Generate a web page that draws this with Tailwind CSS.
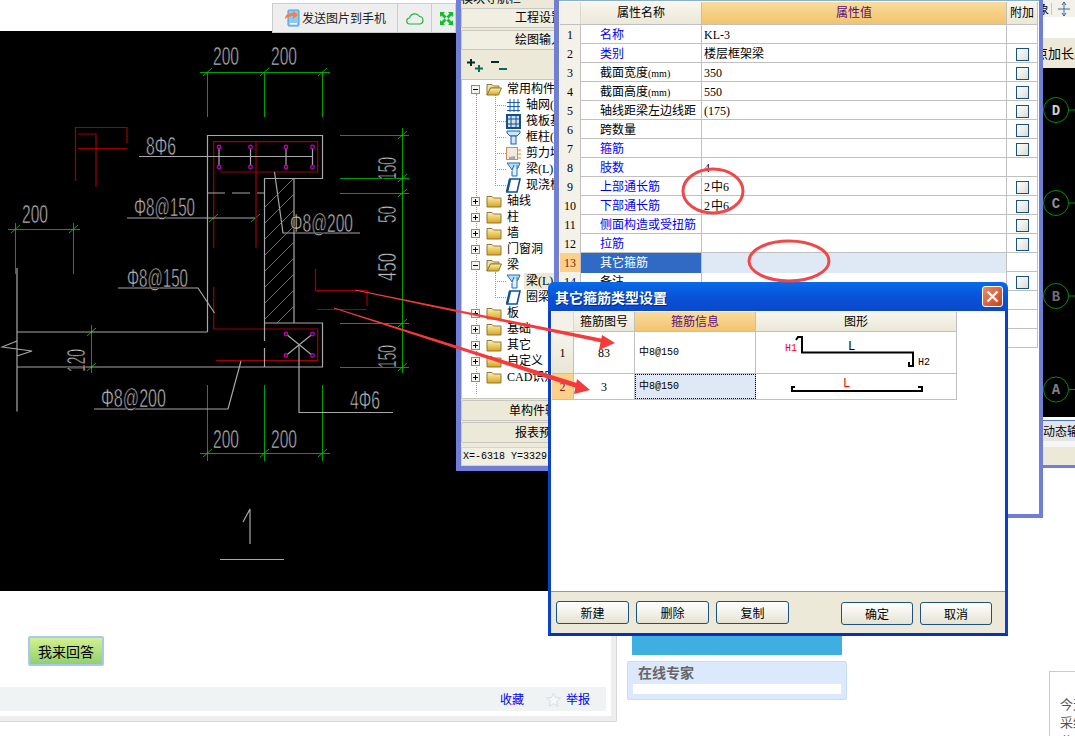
<!DOCTYPE html>
<html lang="zh">
<head>
<meta charset="utf-8">
<script src="https://cdn.jsdelivr.net/npm/@tailwindcss/browser@4"></script>
<title>其它箍筋类型设置</title>
</head>
<body class="bg-white">
<svg width="0" height="0" class="absolute">
  <defs>
    <linearGradient id="fg" x1="0" y1="0" x2="0" y2="1"><stop offset="0" stop-color="#fff2b0"/><stop offset="1" stop-color="#d9a31f"/></linearGradient>
    <symbol id="closed" viewBox="0 0 16 14"><path d="M1 2.500h5l1.500 1.500H15v9H1z" fill="url(#fg)" stroke="#8a7a3a" stroke-width="1"/></symbol>
    <symbol id="open" viewBox="0 0 16 14"><path d="M1 2.500h5l1.500 1.500H13v2H4.500L1 13z" fill="#f2e3a0" stroke="#8a7a3a"/><path d="M4.500 6H15.500L12.500 13H1z" fill="url(#fg)" stroke="#8a7a3a"/></symbol>
    <symbol id="plus" viewBox="0 0 9 9"><rect x=".5" y=".5" width="8" height="8" fill="#f5f4ee" stroke="#8a8a8a"/><path d="M2 4.500h5M4.500 2v5" stroke="#000"/></symbol>
    <symbol id="minus" viewBox="0 0 9 9"><rect x=".5" y=".5" width="8" height="8" fill="#f5f4ee" stroke="#8a8a8a"/><path d="M2 4.500h5" stroke="#000"/></symbol>
    <symbol id="beam" viewBox="0 0 15 15"><path d="M1 1h13l-2 5-5 3z" fill="#bcdcf4" stroke="#1b6fb8"/><path d="M6 9v5h5V3" fill="#dff0fb" stroke="#1b6fb8"/><path d="M8 3l-2 5" stroke="#1b6fb8"/></symbol>
    <symbol id="slab" viewBox="0 0 15 15"><path d="M4 1h10l-3 13H1z" fill="#fff" stroke="#144f9c" stroke-width="1.600"/><path d="M1 14l3-13" stroke="#144f9c" stroke-width="2.400"/></symbol>
  </defs>
</svg>

<div class="relative w-[1075px] h-[736px] overflow-hidden font-['Liberation_Serif','Noto_Sans_CJK_SC',serif] text-[12px] text-black">

  <!-- page behind -->
  <div class="h-[31px] bg-white"></div>
  <div class="h-[560px] w-[552px] bg-black">
    <svg width="552" height="560" viewBox="0 31 552 560" font-family="'Liberation Sans',sans-serif" fill="none">
      <defs><clipPath id="web"><rect x="265" y="179" width="29" height="144"/></clipPath></defs>
      <!-- dimension lines -->
      <g stroke="#00a000" stroke-width="1">
        <path d="M200 72.500H330M207.500 72V117M264.500 72V117M322.500 72V117"/>
        <path d="M340 135.500H409M340 178.500H409M340 193.500H409M340 323.500H409M340 367.500H409M402.500 128V373"/>
        <path d="M8 229.500H80M15.500 223V274M73.500 223V274"/>
        <path d="M91.500 325V373"/>
        <path d="M200 453.500H330M207.500 385V461M264.500 385V461M322.500 385V461"/>
      </g>
      <g stroke="#00e000" stroke-width=".8">
        <path d="M203 76l9-8M260 76l9-8M318 76l9-8M398 139l9-8M398 182l9-8M398 197l9-8M398 327l9-8M398 371l9-8M11 233l9-8M69 233l9-8M87 336l9-8M87 371l9-8M203 457l9-8M260 457l9-8M318 457l9-8M209 222l9-8M251 222l9-8"/>
      </g>
      <!-- stray red shape -->
      <g stroke="#a00000" stroke-width="1.200">
        <path d="M75.500 181V127.500H127V143M78 134H96V187M78 148.500H127"/>
        <path d="M213.700 248V141.700H317.700V172H220M256 141.700V248M213.700 286.700V329H317.700V360.500H216"/>
        <path d="M315.500 269V290.500H367V306M317 309.500H367"/>
      </g>
      <!-- concrete outline -->
      <g stroke="#a8a8a8" stroke-width="1.200">
        <path d="M207.500 332V135.500H322.500V178.500H264.500V341M264.500 348V367M294 178.500V323"/>
        <path d="M264.500 323H322.500V367H17M207.500 332H17M17 268V411.500"/>
        <path d="M17 341L2 347L32 351L17 356"/>
        <path d="M207 193H225M232 193H250M257 193H264"/>
        <path d="M139 156.500H313M127 218H255"/>
        <path d="M274.500 172L283 233H360"/>
        <path d="M118 288H198L214.500 313"/>
        <path d="M94 409H228L241 361"/>
        <path d="M299 345V412.500H393"/>
        <path d="M219 147V167M250.500 147V167M286 147V167M312.500 147V167"/>
        <path d="M286 334L312.500 355.500M312.500 334L286 355.500"/>
        <path d="M243 522L250 509V544M220 559.500H284"/>
      </g>
      <g clip-path="url(#web)" stroke="#888" stroke-width=".8">
        <path d="M264 208L294 178M264 224L294 194M264 240L294 210M264 256L294 226M264 272L294 242M264 288L294 258M264 304L294 274M264 320L294 290M264 336L294 306M264 352L294 322"/>
      </g>
      <!-- rebars -->
      <g stroke="#c000c0" stroke-width="1.200" fill="#200020">
        <circle cx="219" cy="147" r="1.800"/><circle cx="250.500" cy="147" r="1.800"/><circle cx="286" cy="147" r="1.800"/><circle cx="312.500" cy="147" r="1.800"/>
        <circle cx="219" cy="167" r="1.800"/><circle cx="250.500" cy="167" r="1.800"/><circle cx="286" cy="167" r="1.800"/><circle cx="312.500" cy="167" r="1.800"/>
        <circle cx="286" cy="334" r="1.800"/><circle cx="312.500" cy="334" r="1.800"/><circle cx="286" cy="355.500" r="1.800"/><circle cx="312.500" cy="355.500" r="1.800"/>
      </g>
      <g fill="#c0c0c0" stroke="#000" stroke-width=".7" font-size="26">
        <text x="213" y="65" textLength="26" lengthAdjust="spacingAndGlyphs">200</text>
        <text x="271" y="65" textLength="26" lengthAdjust="spacingAndGlyphs">200</text>
        <text x="22" y="223" textLength="26" lengthAdjust="spacingAndGlyphs">200</text>
        <text x="213" y="448" textLength="26" lengthAdjust="spacingAndGlyphs">200</text>
        <text x="271" y="448" textLength="26" lengthAdjust="spacingAndGlyphs">200</text>
        <text x="146" y="155" textLength="30" lengthAdjust="spacingAndGlyphs">8Φ6</text>
        <text x="134" y="216" textLength="61" lengthAdjust="spacingAndGlyphs">Φ8@150</text>
        <text x="290" y="232" textLength="63" lengthAdjust="spacingAndGlyphs">Φ8@200</text>
        <text x="127" y="287" textLength="61" lengthAdjust="spacingAndGlyphs">Φ8@150</text>
        <text x="101" y="407" textLength="65" lengthAdjust="spacingAndGlyphs">Φ8@200</text>
        <text x="350" y="409" textLength="30" lengthAdjust="spacingAndGlyphs">4Φ6</text>
        <text transform="translate(396 180) rotate(-90)" textLength="23" lengthAdjust="spacingAndGlyphs">150</text>
        <text transform="translate(396 223) rotate(-90)" textLength="17" lengthAdjust="spacingAndGlyphs">50</text>
        <text transform="translate(396 281) rotate(-90)" textLength="28" lengthAdjust="spacingAndGlyphs">450</text>
        <text transform="translate(396 368) rotate(-90)" textLength="23" lengthAdjust="spacingAndGlyphs">150</text>
        <text transform="translate(85 372) rotate(-90)" textLength="23" lengthAdjust="spacingAndGlyphs">120</text>
      </g>
    </svg>
  </div>
  <div class="flex h-[145px]">
    <div class="w-[617px] h-[131px] border-r border-b border-[#d6d6d6] rounded-br-[2px]">
      <div class="h-full border-r-[5px] border-b-[5px] border-[#eeeeee] flex flex-col">
        <div class="flex-1 pl-[28px] pt-[45px]">
          <div class="w-[76px] h-[30px] border-2 border-[#a9c8ee] rounded-[2px] bg-linear-to-b from-[#d3f090] to-[#90cf72] flex items-center justify-center text-[14px] leading-none font-['Noto_Sans_CJK_SC',sans-serif]">我来回答</div>
        </div>
        <div class="h-[24px] mb-[5px] mr-[5px] bg-[#f0f3f4] flex items-center justify-end pr-[16px] text-[#0000ff] font-['Noto_Sans_CJK_SC',sans-serif]">
          <span>收藏</span>
          <svg class="ml-[22px] mr-[5px]" width="15" height="15" viewBox="0 0 15 15"><path d="M7.500 1l2 4.500 5 .5-3.700 3.300 1 5-4.300-2.600-4.300 2.600 1-5L.5 6l5-.5z" fill="#f4f6f8" stroke="#d4dce4"/></svg>
          <span>举报</span>
        </div>
      </div>
    </div>
    <div class="ml-[10px] w-[220px] flex flex-col">
      <div class="ml-[5px] w-[210px] h-[64px] bg-[#3fafe2]"></div>
      <div class="mt-[6px] h-[39px] bg-[#dce8fb] border border-[#c9dcf6] rounded-[2px] px-[5px]">
        <div class="h-[22px] pl-[5px] text-[14px] leading-[21px] font-bold text-[#666666] font-['Noto_Sans_CJK_SC',sans-serif]">在线专家</div>
        <div class="h-[10px] bg-white"></div>
      </div>
    </div>
    <div class="ml-[202px] mt-[80px] w-[26px] h-[80px] border-l border-t border-[#dccb9c] pl-[10px] pt-[23px] text-[#555555] text-[13px] leading-[18px] whitespace-nowrap font-['Noto_Sans_CJK_SC',sans-serif]">今天<br>采纳<br>公</div>
  </div>

  <!-- right-hand app behind -->
  <div class="absolute left-[1043px] top-0 w-[32px] h-[468px] overflow-hidden flex flex-col border-b-[3px] border-[#6f7fd8]">
    <div class="h-[17px] bg-[#f3f1e8] flex items-center overflow-hidden font-['Noto_Sans_CJK_SC',sans-serif]">
      <span class="-ml-[6px]">象</span>
      <span class="ml-[2px] w-px h-[12px] bg-[#c8c8c0]"></span>
      <svg class="ml-[5px] shrink-0" width="14" height="14" viewBox="0 0 14 14" fill="none" stroke="#3a6ea5"><path d="M7 0v14M1 7h12M7 0L5 3M7 0l2 3M7 14l-2-3M7 14l2-3"/></svg>
    </div>
    <div class="h-[21px] bg-white"></div>
    <div class="h-[30px] bg-[#ece9d8] flex items-center overflow-hidden whitespace-nowrap text-[13px] font-['Noto_Sans_CJK_SC',sans-serif]"><span class="-ml-[8px]">点加长度</span></div>
    <div class="h-[349px] bg-black">
      <svg width="32" height="349" viewBox="0 68 32 349" font-family="'Liberation Mono',monospace" font-size="14" font-weight="bold" text-anchor="middle">
        <g fill="none" stroke="#009000"><circle cx="13" cy="110" r="12.500"/><circle cx="13" cy="203" r="12.500"/><circle cx="13" cy="296" r="12.500"/><circle cx="13" cy="389.500" r="12.500"/>
        <path d="M25.500 110H32M25.500 203H32M25.500 296H32M25.500 389.500H32"/></g>
        <text x="13" y="115" fill="#d0d0d0">D</text><text x="13" y="208" fill="#909090">C</text><text x="13" y="301" fill="#707070">B</text><text x="13" y="394" fill="#808080">A</text>
      </svg>
    </div>
    <div class="h-[3px] bg-white"></div>
    <div class="h-[21px] bg-[#e4e4e4] border-t border-[#4a78c8] flex items-center overflow-hidden whitespace-nowrap text-[12px] font-['Noto_Sans_CJK_SC',sans-serif]"><span>动态输入</span></div>
    <div class="h-[6px] bg-[#f6f6f6]"></div>
    <div class="flex-1 bg-[#ece9d8]"></div>
  </div>

  <!-- top-left floating toolbar -->
  <div class="absolute left-[272px] top-[3px] w-[184px] h-[30px] bg-[#eeeeee] border border-[#cccccc] flex items-center">
    <div class="w-[125px] h-full border-r border-[#cccccc] flex items-center pl-[11px] text-[12px] font-['Noto_Sans_CJK_SC',sans-serif] text-[#222222]">
      <svg width="16" height="18" viewBox="0 0 16 18"><rect x="4" y="1" width="11" height="16" rx="1" fill="#8fc8f0" stroke="#4a9ad8"/><rect x="6" y="14" width="7" height="1.500" fill="#fff"/><path d="M1 9c1-4 4-5 8-5V2l5 4-5 4V7C6 7 3 8 1 10z" fill="#ff7a3c"/></svg>
      <span class="ml-[2px] whitespace-nowrap">发送图片到手机</span>
    </div>
    <div class="w-[34px] h-full border-r border-[#cccccc] flex items-center justify-center">
      <svg width="18" height="13" viewBox="0 0 18 13" fill="none" stroke="#21b83c" stroke-width="1.200"><path d="M4 12a3 3 0 0 1-.5-6A5.500 5.500 0 0 1 13.500 4.500 3.800 3.800 0 0 1 14 12z"/></svg>
    </div>
    <div class="flex-1 flex items-center justify-center pl-[6px]">
      <svg width="13" height="13" viewBox="0 0 13 13" fill="#0fbf2a"><path d="M0 0h5L3.500 1.500 6.500 4.500 4.500 6.500 1.500 3.500 0 5zM13 0v5L11.500 3.500 8.500 6.500 6.500 4.500 9.500 1.500 8 0zM0 13V8l1.500 1.500 3-3 2 2-3 3L5 13zM13 13H8l1.500-1.500-3-3 2-2 3 3L13 8z"/></svg>
    </div>
  </div>

  <!-- navigation window -->
  <div class="absolute left-[456px] top-0 w-[166px] h-[471px] bg-[#ece9d8] border-x-[5px] border-b-[5px] border-[#6f7fd8] flex flex-col">
    <div class="h-[8px] overflow-hidden leading-none"><div class="-mt-[7px]">模块导航栏</div></div>
    <div class="h-[20px] bg-[#f1eee2] border border-[#c8c8c0] rounded-[2px] flex items-center justify-center">工程设置</div>
    <div class="mt-[2px] h-[20px] bg-[#f1eee2] border border-[#c8c8c0] rounded-[2px] flex items-center justify-center">绘图输入</div>
    <div class="mt-[2px] h-[27px] flex items-center pl-[6px] gap-[7px]">
      <svg width="17" height="13" viewBox="0 0 17 13" stroke="#0d2a2a" stroke-width="2"><path d="M0 3.500h8M4 0v7"/><path d="M8 9.500h8M12 6v7" stroke="#0a6a5a"/></svg>
      <svg width="16" height="11" viewBox="0 0 16 11" stroke="#0d2a2a" stroke-width="2"><path d="M0 2h8"/><path d="M8 9h8" stroke="#0a6a5a"/></svg>
    </div>
    <div class="relative h-[320px] w-[156px] bg-white border border-[#c8c8c0] pt-[1px] leading-[16px]">
      <span class="absolute left-[14px] top-[14px] h-[300px] border-l border-dotted border-[#9a9a9a]"></span>
      <span class="absolute left-[33px] top-[14px] h-[92px] border-l border-dotted border-[#9a9a9a]"></span>
      <span class="absolute left-[33px] top-[192px] h-[26px] border-l border-dotted border-[#9a9a9a]"></span>

      <div class="relative h-4 flex items-center pl-[9px]"><svg width="9" height="9"><use href="#minus"/></svg><svg class="ml-[6px]" width="16" height="14"><use href="#open"/></svg><span class="ml-[5px] whitespace-nowrap">常用构件类型</span></div>
      <div class="relative h-4 flex items-center pl-[44px]"><span class="absolute left-[33px] w-[11px] border-t border-dotted border-[#9a9a9a]"></span><svg width="15" height="15" viewBox="0 0 15 15" stroke="#1a5fb4" fill="none"><path d="M1 4.500h13M1 8.500h13M1 12.500h13M4 1v13M8 1v13M12 1v13"/></svg><span class="ml-[5px] whitespace-nowrap">轴网(J)</span></div>
      <div class="relative h-4 flex items-center pl-[44px]"><span class="absolute left-[33px] w-[11px] border-t border-dotted border-[#9a9a9a]"></span><svg width="15" height="15" viewBox="0 0 15 15" stroke="#144f8c" fill="#cfe3f5"><rect x="1" y="1" width="13" height="13" stroke-width="2"/><path d="M5 1v13M10 1v13M1 5h13M1 10h13" fill="none"/></svg><span class="ml-[5px] whitespace-nowrap">筏板基础(M)</span></div>
      <div class="relative h-4 flex items-center pl-[44px]"><span class="absolute left-[33px] w-[11px] border-t border-dotted border-[#9a9a9a]"></span><svg width="15" height="15" viewBox="0 0 15 15" stroke="#1a5fb4" fill="#cfe6f8"><path d="M1 1h13v2l-3 3H4L1 3z"/><rect x="5" y="6" width="5" height="8"/></svg><span class="ml-[5px] whitespace-nowrap">框柱(Z)</span></div>
      <div class="relative h-4 flex items-center pl-[44px]"><span class="absolute left-[33px] w-[11px] border-t border-dotted border-[#9a9a9a]"></span><svg width="15" height="15" viewBox="0 0 15 15"><rect x=".5" y="1.500" width="11" height="12" fill="#f4e9dc" stroke="#c89060"/><path d="M3 11l6-1v3H3z" fill="#a8a8a8"/><path d="M12 4h3M12 8h3M12 12h3" stroke="#e8862a"/></svg><span class="ml-[5px] whitespace-nowrap">剪力墙(Q)</span></div>
      <div class="relative h-4 flex items-center pl-[44px]"><span class="absolute left-[33px] w-[11px] border-t border-dotted border-[#9a9a9a]"></span><svg width="15" height="15"><use href="#beam"/></svg><span class="ml-[5px] whitespace-nowrap">梁(L)</span></div>
      <div class="relative h-4 flex items-center pl-[44px]"><span class="absolute left-[33px] w-[11px] border-t border-dotted border-[#9a9a9a]"></span><svg width="15" height="15"><use href="#slab"/></svg><span class="ml-[5px] whitespace-nowrap">现浇板(B)</span></div>

      <div class="relative h-4 flex items-center pl-[9px]"><svg width="9" height="9"><use href="#plus"/></svg><svg class="ml-[6px]" width="16" height="14"><use href="#closed"/></svg><span class="ml-[5px]">轴线</span></div>
      <div class="relative h-4 flex items-center pl-[9px]"><svg width="9" height="9"><use href="#plus"/></svg><svg class="ml-[6px]" width="16" height="14"><use href="#closed"/></svg><span class="ml-[5px]">柱</span></div>
      <div class="relative h-4 flex items-center pl-[9px]"><svg width="9" height="9"><use href="#plus"/></svg><svg class="ml-[6px]" width="16" height="14"><use href="#closed"/></svg><span class="ml-[5px]">墙</span></div>
      <div class="relative h-4 flex items-center pl-[9px]"><svg width="9" height="9"><use href="#plus"/></svg><svg class="ml-[6px]" width="16" height="14"><use href="#closed"/></svg><span class="ml-[5px]">门窗洞</span></div>
      <div class="relative h-4 flex items-center pl-[9px]"><svg width="9" height="9"><use href="#minus"/></svg><svg class="ml-[6px]" width="16" height="14"><use href="#open"/></svg><span class="ml-[5px]">梁</span></div>
      <div class="relative h-4 flex items-center pl-[44px]"><span class="absolute left-[33px] w-[11px] border-t border-dotted border-[#9a9a9a]"></span><svg width="15" height="15"><use href="#beam"/></svg><span class="ml-[3px] pl-[2px] bg-[#ece9d8] whitespace-nowrap w-[60px]">梁(L)</span></div>
      <div class="relative h-4 flex items-center pl-[44px]"><span class="absolute left-[33px] w-[11px] border-t border-dotted border-[#9a9a9a]"></span><svg width="15" height="15"><use href="#slab"/></svg><span class="ml-[5px] whitespace-nowrap">圈梁(E)</span></div>
      <div class="relative h-4 flex items-center pl-[9px]"><svg width="9" height="9"><use href="#plus"/></svg><svg class="ml-[6px]" width="16" height="14"><use href="#closed"/></svg><span class="ml-[5px]">板</span></div>
      <div class="relative h-4 flex items-center pl-[9px]"><svg width="9" height="9"><use href="#plus"/></svg><svg class="ml-[6px]" width="16" height="14"><use href="#closed"/></svg><span class="ml-[5px]">基础</span></div>
      <div class="relative h-4 flex items-center pl-[9px]"><svg width="9" height="9"><use href="#plus"/></svg><svg class="ml-[6px]" width="16" height="14"><use href="#closed"/></svg><span class="ml-[5px]">其它</span></div>
      <div class="relative h-4 flex items-center pl-[9px]"><svg width="9" height="9"><use href="#plus"/></svg><svg class="ml-[6px]" width="16" height="14"><use href="#closed"/></svg><span class="ml-[5px]">自定义</span></div>
      <div class="relative h-4 flex items-center pl-[9px]"><svg width="9" height="9"><use href="#plus"/></svg><svg class="ml-[6px]" width="16" height="14"><use href="#closed"/></svg><span class="ml-[5px] whitespace-nowrap">CAD识别</span></div>
    </div>
    <div class="mt-[1px] h-[21px] bg-[#ece9d8] border border-[#c8c8c0] rounded-[2px] flex items-center justify-center">单构件输入</div>
    <div class="mt-[1px] h-[21px] bg-[#ece9d8] border border-[#c8c8c0] rounded-[2px] flex items-center justify-center">报表预览</div>
    <div class="mt-[4px] h-[19px] bg-[#f1eee2] border border-[#d8d5c8] pl-[1px] flex items-center font-['Liberation_Mono',monospace] text-[10px]">X=-6318 Y=3329</div>
  </div>

  <!-- properties window -->
  <div class="absolute left-[554px] top-0 w-[489px] h-[518px] bg-white border-l-[5px] border-r-[4px] border-b-[4px] border-[#6f7fd8] pt-[2px] pl-[1px]">
    <div class="absolute left-0 top-0 w-full h-px bg-[#8ab0c8]"></div>
    <div class="w-[478px]">
      <div class="grid grid-cols-[21px_121px_305px_31px] h-[23px] border-b border-[#c0c0c0] text-center">
        <div class="bg-[#f3f1e8] border-r border-[#d8d8d0]"></div>
        <div class="bg-linear-to-b from-[#f8f6ee] to-[#ebe8d8] border-r border-[#c0c0c0] flex items-center justify-center">属性名称</div>
        <div class="bg-linear-to-b from-[#f9dc9c] to-[#f3c36c] border-r border-[#c0c0c0] flex items-center justify-center text-[#5b0a7c]">属性值</div>
        <div class="bg-linear-to-b from-[#f8f6ee] to-[#ebe8d8] border-r border-[#c0c0c0] flex items-center justify-center">附加</div>
      </div>

      <div class="grid grid-cols-[21px_121px_305px_31px] h-[19px] border-b border-[#c0c0c0] leading-[20px]"><div class="bg-[#f3f1e8] border-r border-[#c0c0c0] text-center">1</div><div class="border-r border-[#c0c0c0] pl-[19px] text-[#0000ff]">名称</div><div class="border-r border-[#c0c0c0] pl-[2px]">KL-3</div><div class="border-r border-[#c0c0c0]"></div></div>
      <div class="grid grid-cols-[21px_121px_305px_31px] h-[19px] border-b border-[#c0c0c0] leading-[20px]"><div class="bg-[#f3f1e8] border-r border-[#c0c0c0] text-center">2</div><div class="border-r border-[#c0c0c0] pl-[19px] text-[#0000ff]">类别</div><div class="border-r border-[#c0c0c0] pl-[2px]">楼层框架梁</div><div class="border-r border-[#c0c0c0] flex items-center justify-center"><span class="w-[13px] h-[13px] border border-[#1c5180] bg-linear-to-br from-white to-[#dcdcd6]"></span></div></div>
      <div class="grid grid-cols-[21px_121px_305px_31px] h-[19px] border-b border-[#c0c0c0] leading-[20px]"><div class="bg-[#f3f1e8] border-r border-[#c0c0c0] text-center">3</div><div class="border-r border-[#c0c0c0] pl-[19px] whitespace-nowrap">截面宽度<span class="text-[10px]">(mm)</span></div><div class="border-r border-[#c0c0c0] pl-[2px]">350</div><div class="border-r border-[#c0c0c0] flex items-center justify-center"><span class="w-[13px] h-[13px] border border-[#1c5180] bg-linear-to-br from-white to-[#dcdcd6]"></span></div></div>
      <div class="grid grid-cols-[21px_121px_305px_31px] h-[19px] border-b border-[#c0c0c0] leading-[20px]"><div class="bg-[#f3f1e8] border-r border-[#c0c0c0] text-center">4</div><div class="border-r border-[#c0c0c0] pl-[19px] whitespace-nowrap">截面高度<span class="text-[10px]">(mm)</span></div><div class="border-r border-[#c0c0c0] pl-[2px]">550</div><div class="border-r border-[#c0c0c0] flex items-center justify-center"><span class="w-[13px] h-[13px] border border-[#1c5180] bg-linear-to-br from-white to-[#dcdcd6]"></span></div></div>
      <div class="grid grid-cols-[21px_121px_305px_31px] h-[19px] border-b border-[#c0c0c0] leading-[20px]"><div class="bg-[#f3f1e8] border-r border-[#c0c0c0] text-center">5</div><div class="border-r border-[#c0c0c0] pl-[19px] whitespace-nowrap">轴线距梁左边线距</div><div class="border-r border-[#c0c0c0] pl-[2px]">(175)</div><div class="border-r border-[#c0c0c0] flex items-center justify-center"><span class="w-[13px] h-[13px] border border-[#1c5180] bg-linear-to-br from-white to-[#dcdcd6]"></span></div></div>
      <div class="grid grid-cols-[21px_121px_305px_31px] h-[19px] border-b border-[#c0c0c0] leading-[20px]"><div class="bg-[#f3f1e8] border-r border-[#c0c0c0] text-center">6</div><div class="border-r border-[#c0c0c0] pl-[19px]">跨数量</div><div class="border-r border-[#c0c0c0] pl-[2px]"></div><div class="border-r border-[#c0c0c0] flex items-center justify-center"><span class="w-[13px] h-[13px] border border-[#1c5180] bg-linear-to-br from-white to-[#dcdcd6]"></span></div></div>
      <div class="grid grid-cols-[21px_121px_305px_31px] h-[19px] border-b border-[#c0c0c0] leading-[20px]"><div class="bg-[#f3f1e8] border-r border-[#c0c0c0] text-center">7</div><div class="border-r border-[#c0c0c0] pl-[19px] text-[#0000ff]">箍筋</div><div class="border-r border-[#c0c0c0] pl-[2px]"></div><div class="border-r border-[#c0c0c0] flex items-center justify-center"><span class="w-[13px] h-[13px] border border-[#1c5180] bg-linear-to-br from-white to-[#dcdcd6]"></span></div></div>
      <div class="grid grid-cols-[21px_121px_305px_31px] h-[19px] border-b border-[#c0c0c0] leading-[20px]"><div class="bg-[#f3f1e8] border-r border-[#c0c0c0] text-center">8</div><div class="border-r border-[#c0c0c0] pl-[19px] text-[#0000ff]">肢数</div><div class="border-r border-[#c0c0c0] pl-[2px]">4</div><div class="border-r border-[#c0c0c0]"></div></div>
      <div class="grid grid-cols-[21px_121px_305px_31px] h-[19px] border-b border-[#c0c0c0] leading-[20px]"><div class="bg-[#f3f1e8] border-r border-[#c0c0c0] text-center">9</div><div class="border-r border-[#c0c0c0] pl-[19px] text-[#0000ff]">上部通长筋</div><div class="border-r border-[#c0c0c0] pl-[2px]">2&#8202;中6</div><div class="border-r border-[#c0c0c0] flex items-center justify-center"><span class="w-[13px] h-[13px] border border-[#1c5180] bg-linear-to-br from-white to-[#dcdcd6]"></span></div></div>
      <div class="grid grid-cols-[21px_121px_305px_31px] h-[19px] border-b border-[#c0c0c0] leading-[20px]"><div class="bg-[#f3f1e8] border-r border-[#c0c0c0] text-center">10</div><div class="border-r border-[#c0c0c0] pl-[19px] text-[#0000ff]">下部通长筋</div><div class="border-r border-[#c0c0c0] pl-[2px]">2&#8202;中6</div><div class="border-r border-[#c0c0c0] flex items-center justify-center"><span class="w-[13px] h-[13px] border border-[#1c5180] bg-linear-to-br from-white to-[#dcdcd6]"></span></div></div>
      <div class="grid grid-cols-[21px_121px_305px_31px] h-[19px] border-b border-[#c0c0c0] leading-[20px]"><div class="bg-[#f3f1e8] border-r border-[#c0c0c0] text-center">11</div><div class="border-r border-[#c0c0c0] pl-[19px] text-[#0000ff] whitespace-nowrap">侧面构造或受扭筋</div><div class="border-r border-[#c0c0c0] pl-[2px]"></div><div class="border-r border-[#c0c0c0] flex items-center justify-center"><span class="w-[13px] h-[13px] border border-[#1c5180] bg-linear-to-br from-white to-[#dcdcd6]"></span></div></div>
      <div class="grid grid-cols-[21px_121px_305px_31px] h-[19px] border-b border-[#c0c0c0] leading-[20px]"><div class="bg-[#f3f1e8] border-r border-[#c0c0c0] text-center">12</div><div class="border-r border-[#c0c0c0] pl-[19px] text-[#0000ff]">拉筋</div><div class="border-r border-[#c0c0c0] pl-[2px]"></div><div class="border-r border-[#c0c0c0] flex items-center justify-center"><span class="w-[13px] h-[13px] border border-[#1c5180] bg-linear-to-br from-white to-[#dcdcd6]"></span></div></div>
      <div class="grid grid-cols-[21px_121px_305px_31px] h-[19px] border-b border-[#c0c0c0] leading-[20px]"><div class="bg-[#fdd08a] text-[#7a1a1a] border-r border-[#c0c0c0] text-center">13</div><div class="bg-[#316ac5] text-white border-r border-[#c0c0c0] pl-[19px]">其它箍筋</div><div class="bg-[#dfe8f5] border-r border-[#c0c0c0]"></div><div class="border-r border-[#c0c0c0]"></div></div>
      <div class="grid grid-cols-[21px_121px_305px_31px] h-[19px] border-b border-[#c0c0c0] leading-[20px]"><div class="bg-[#f3f1e8] border-r border-[#c0c0c0] text-center">14</div><div class="border-r border-[#c0c0c0] pl-[19px]">备注</div><div class="border-r border-[#c0c0c0]"></div><div class="border-r border-[#c0c0c0] flex items-center justify-center"><span class="w-[13px] h-[13px] border border-[#1c5180] bg-linear-to-br from-white to-[#dcdcd6]"></span></div></div>
      <div class="grid grid-cols-[21px_121px_305px_31px] h-[19px] border-b border-[#c0c0c0]"><div class="bg-[#f3f1e8] border-r border-[#c0c0c0]"></div><div class="border-r border-[#c0c0c0]"></div><div class="border-r border-[#c0c0c0]"></div><div class="border-r border-[#c0c0c0]"></div></div>
      <div class="grid grid-cols-[21px_121px_305px_31px] h-[19px] border-b border-[#c0c0c0]"><div class="bg-[#f3f1e8] border-r border-[#c0c0c0]"></div><div class="border-r border-[#c0c0c0]"></div><div class="border-r border-[#c0c0c0]"></div><div class="border-r border-[#c0c0c0]"></div></div>
      <div class="grid grid-cols-[21px_121px_305px_31px] h-[19px] border-b border-[#c0c0c0]"><div class="bg-[#f3f1e8] border-r border-[#c0c0c0]"></div><div class="border-r border-[#c0c0c0]"></div><div class="border-r border-[#c0c0c0]"></div><div class="border-r border-[#c0c0c0]"></div></div>
    </div>
  </div>

  <!-- dialog -->
  <div class="absolute left-[548px] top-[282px] w-[460px] h-[354px] flex flex-col">
    <div class="h-[29px] rounded-t-[6px] bg-linear-to-b from-[#0a6ae8] via-[#0654d9] to-[#0c47cc] flex items-center justify-between pl-[7px] pr-[5px]">
      <span class="text-white font-bold text-[14px] leading-none font-['Noto_Sans_CJK_SC',sans-serif] [text-shadow:1px_1px_0_#002a80]">其它箍筋类型设置</span>
      <span class="w-[21px] h-[21px] rounded-[3px] border border-white bg-linear-to-br from-[#ee8a66] to-[#c93c1c] flex items-center justify-center">
        <svg width="13" height="13" viewBox="0 0 13 13" stroke="#fff" stroke-width="2.400"><path d="M1.500 1.500l10 10M11.500 1.500l-10 10"/></svg>
      </span>
    </div>
    <div class="flex-1 flex flex-col border-x-[3px] border-b-[3px] border-x-[#0a3fd0] border-b-[#0831b8]">
      <div class="flex-1 bg-white pl-px pt-px">
        <div class="w-[405px]">
          <div class="grid grid-cols-[22px_61px_121px_201px] h-[20px] border-b border-[#c0c0c0]">
            <div class="bg-[#f3f1e8] border-r border-[#d8d8d0]"></div>
            <div class="bg-linear-to-b from-[#f8f6ee] to-[#ebe8d8] border-r border-[#c0c0c0] flex items-center justify-center">箍筋图号</div>
            <div class="bg-linear-to-b from-[#f9dc9c] to-[#f3c36c] border-r border-[#c0c0c0] flex items-center justify-center text-[#5b0a7c]">箍筋信息</div>
            <div class="bg-linear-to-b from-[#f8f6ee] to-[#ebe8d8] border-r border-[#c0c0c0] flex items-center justify-center">图形</div>
          </div>
          <div class="grid grid-cols-[22px_61px_121px_201px] h-[42px] border-b border-[#c0c0c0]">
            <div class="bg-linear-to-b from-[#f6f4ec] to-[#e9e6d6] border-r border-[#c0c0c0] flex items-center justify-center">1</div>
            <div class="border-r border-[#c0c0c0] flex items-center justify-center">83</div>
            <div class="border-r border-[#c0c0c0] flex items-center pl-[4px] font-['Liberation_Mono','Noto_Sans_CJK_SC',monospace] text-[10px]">中8@150</div>
            <div class="relative border-r border-[#c0c0c0]">
              <svg class="absolute inset-0" width="200" height="41" viewBox="756 332 200 41" font-family="'Liberation Mono',monospace" font-size="10">
                <path d="M796 340L798 337H802V352.500H913V366L909 366V362" fill="none" stroke="#000" stroke-width="2"/>
                <text x="785" y="351" fill="#ff0000">H1</text><text x="848" y="350" font-size="12">L</text><text x="918" y="365">H2</text>
              </svg>
            </div>
          </div>
          <div class="grid grid-cols-[22px_61px_121px_201px] h-[26px] border-b border-[#c0c0c0]">
            <div class="bg-[#fdd08a] text-[#7a1a1a] border-r border-[#c0c0c0] flex items-center justify-center">2</div>
            <div class="border-r border-[#c0c0c0] flex items-center justify-center">3</div>
            <div class="border-r border-[#c0c0c0] flex items-center pl-[4px] bg-[#dfe8f5] outline-1 outline-dotted -outline-offset-1 outline-black font-['Liberation_Mono','Noto_Sans_CJK_SC',monospace] text-[10px]">中8@150</div>
            <div class="relative border-r border-[#c0c0c0]">
              <svg class="absolute inset-0" width="200" height="25" viewBox="756 374 200 25" font-family="'Liberation Mono',monospace" font-size="12">
                <path d="M795 387H792V391H922V387H918" fill="none" stroke="#000" stroke-width="2"/>
                <text x="843" y="387" fill="#ff0000">L</text>
              </svg>
            </div>
          </div>
        </div>
      </div>
      <div class="h-[42px] bg-[#ece9d8] border-t border-[#8a9ab8] flex pl-[5px] pr-[13px] pt-[9px] font-['Noto_Sans_CJK_SC',sans-serif] text-[12px]">
        <div class="flex gap-[7px] h-[23px]">
          <div class="w-[73px] border border-[#1c5180] rounded-[3px] bg-linear-to-b from-white to-[#e6e3d4] flex items-center justify-center">新建</div>
          <div class="w-[73px] border border-[#1c5180] rounded-[3px] bg-linear-to-b from-white to-[#e6e3d4] flex items-center justify-center">删除</div>
          <div class="w-[73px] border border-[#1c5180] rounded-[3px] bg-linear-to-b from-white to-[#e6e3d4] flex items-center justify-center">复制</div>
        </div>
        <div class="ml-auto mt-px flex gap-[7px] h-[23px]">
          <div class="w-[72px] border border-[#1c5180] rounded-[3px] bg-linear-to-b from-white to-[#e6e3d4] flex items-center justify-center">确定</div>
          <div class="w-[72px] border border-[#1c5180] rounded-[3px] bg-linear-to-b from-white to-[#e6e3d4] flex items-center justify-center">取消</div>
        </div>
      </div>
    </div>
  </div>

  <!-- annotations drawn on the screenshot -->
  <svg class="absolute left-0 top-0 pointer-events-none" width="1075" height="736" viewBox="0 0 1075 736" fill="none">
    <ellipse cx="713" cy="191" rx="30" ry="22" stroke="#f04848" stroke-width="3"/>
    <ellipse cx="789" cy="261" rx="40" ry="20" stroke="#f04848" stroke-width="3"/>
    <path d="M355 289.500L355 290.500L604 343L606 339.500z" fill="#f43a3a"/>
    <path d="M615 343L602 335L599 350z" fill="#f43a3a"/>
    <path d="M334 307.500L334 308.500L578 388.500L580 384z" fill="#f43a3a"/>
    <path d="M590 390L577 379L574 394z" fill="#f43a3a"/>
  </svg>
</div>
</body>
</html>
